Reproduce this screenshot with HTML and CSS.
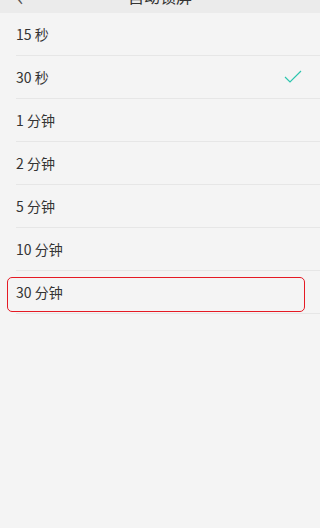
FILE: index.html
```html
<!DOCTYPE html>
<html lang="zh-CN">
  <head>
    <meta charset="UTF-8">
    <title>自动锁屏</title>
    <link rel="stylesheet" href="styles.css">
  </head>
  <body>

    <div class="header">
      <span class="back">&lsaquo;</span>
      <span class="title">自动锁屏</span>
    </div>

    <div class="list">
      <div class="row"><span>15 秒</span></div>
      <div class="row">
        <span>30 秒</span>
        <svg class="check" width="18" height="14" viewBox="0 0 18 14">
          <path d="M1 7 L6 12 L17 1" fill="none" stroke="#2cc5ae" stroke-width="1.2"/>
        </svg>
      </div>
      <div class="row"><span>1 分钟</span></div>
      <div class="row"><span>2 分钟</span></div>
      <div class="row"><span>5 分钟</span></div>
      <div class="row"><span>10 分钟</span></div>
      <div class="row"><span>30 分钟</span></div>
    </div>

    <div class="mark"></div>

  </body>
</html>
```

FILE: styles.css
```css
* {
  box-sizing: border-box;
  margin: 0;
  padding: 0;
}

body {
  width: 320px;
  height: 528px;
  background-color: #f4f4f4;
  font-family: "Noto Sans CJK SC", "Noto Sans", sans-serif;
  color: #333;
  overflow: hidden;
  position: relative;
}

.header {
  height: 13px;
  background-color: #ebebeb;
  overflow: hidden;
  position: relative;
}

.header .back {
  position: absolute;
  left: 17px;
  bottom: 6px;
  font-size: 22px;
  line-height: 22px;
  color: #555;
}

.header .title {
  position: absolute;
  left: 0;
  right: 0;
  bottom: 8px;
  text-align: center;
  font-size: 16px;
  line-height: 18px;
  color: #333;
}

.list {
  padding-left: 16px;
}

.row {
  height: 43px;
  display: flex;
  align-items: center;
  justify-content: space-between;
  border-bottom: 1px solid #e6e6e6;
  font-size: 14px;
}

.check {
  margin-right: 18px;
}

.mark {
  position: absolute;
  left: 7px;
  top: 277px;
  width: 298px;
  height: 35px;
  border: 1.5px solid #e51a24;
  border-radius: 5px;
}
```
